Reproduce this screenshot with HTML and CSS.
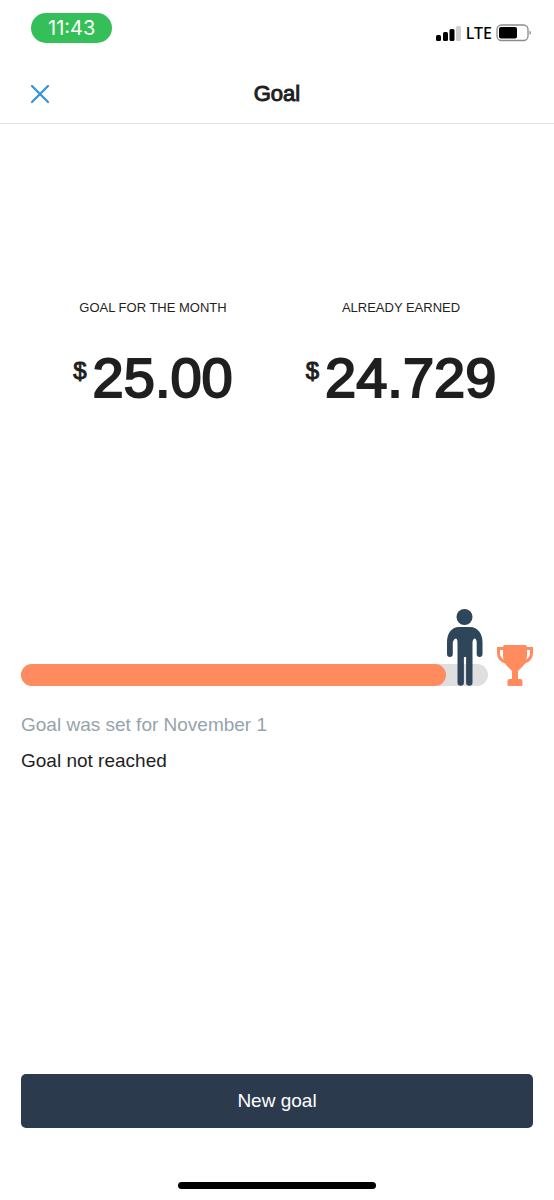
FILE: index.html
```html
<!DOCTYPE html>
<html lang="en">
<head>
	<meta charset="UTF-8">
	<meta name="viewport" content="width=device-width, initial-scale=1">
	<title>Goal</title>
	<link rel="stylesheet" href="styles.css">
</head>
<body>
	<div class="status">
		<span class="time">11:43</span>
		<div class="signal">
			<svg width="26" height="16" viewBox="0 0 26 16">
				<rect x="0" y="10" width="5" height="6" rx="1.5"/>
				<rect x="7" y="7" width="5" height="9" rx="1.5"/>
				<rect x="13.5" y="4" width="5" height="12" rx="1.5"/>
				<rect x="20" y="1" width="5" height="15" rx="1.5" fill="#d0d0d0"/>
			</svg>
			<span>LTE</span>
			<svg width="36" height="18" viewBox="0 0 36 18">
				<rect x="1" y="1" width="31" height="15.5" rx="4.5" fill="none" stroke="#8c8c8c" stroke-width="1.3"/>
				<rect x="3" y="3" width="18" height="11.5" rx="2"/>
				<path d="M33.5 6.5q3 2.2 0 4.5z" fill="#8c8c8c"/>
			</svg>
		</div>
	</div>
	<header class="header">
		<button class="close" type="button" aria-label="Close">
			<svg width="20" height="20" viewBox="0 0 20 20">
				<path d="M2 2l16 16M18 2L2 18" fill="none" stroke="#3492d8" stroke-width="2.2" stroke-linecap="round"/>
			</svg>
		</button>
		<h1>Goal</h1>
	</header>

	<main class="main">
		<div class="stats">
			<div class="stat">
				<h2>GOAL FOR THE MONTH</h2>
				<p class="amount"><span class="currency">$</span>25.00</p>
			</div>
			<div class="stat">
				<h2>ALREADY EARNED</h2>
				<p class="amount"><span class="currency">$</span>24.729</p>
			</div>
		</div>

		<div class="progress">
			<div class="track">
				<div class="fill" style="width: 91%">
					<svg class="person" width="38" height="78" viewBox="0 0 38 78" fill="#2f455a">
						<circle cx="18.5" cy="9" r="8"/>
						<path d="M13 19H24C32 19 36.500 26 36.500 34V46a2.900 2.900 0 0 1-5.800 0V34q-.5-3.500-2-3.500T26.500 34V74.500a3 3 0 0 1-6.400 0V49H17.900V74.500a3 3 0 0 1-6.400 0V34q-.2-3.500-1.800-3.500T6.800 34V46a2.900 2.900 0 0 1-5.800 0V34C1 26 5 19 13 19z"/>
					</svg>
				</div>
			</div>
			<svg class="trophy" width="36" height="41" viewBox="0 0 36 41" fill="#ff8b5e">
				<path d="M8 0H28Q30 0 30 2V10Q30 17 26 21L21 26V34H23.500Q25.500 34 25.500 36V40Q25.500 41 24.500 41H11.500Q10.500 41 10.500 40V36Q10.500 34 12.500 34H15V26L10 21Q6 17 6 10V2Q6 0 8 0z"/>
				<path d="M7 3.500H1.500V8Q1.500 15 9.500 17.500M29 3.500H34.500V8Q34.500 15 26.500 17.500" fill="none" stroke="#ff8b5e" stroke-width="3"/>
			</svg>
		</div>
		<p class="set">Goal was set for November 1</p>
		<p class="result">Goal not reached</p>

		<button class="new" type="button">New goal</button>
	</main>
	<div class="home"></div>
</body>
</html>
```
FILE: styles.css
```css
*{margin: 0;padding: 0;box-sizing: border-box;}
body {
	display: flex;
	flex-direction: column;
	min-height: 100vh;
	background: #fff;
	color: #1f1f1f;
	font: 19px/24px "Liberation Sans", Arial, sans-serif;
}
svg {
	display: block;
}
button {
	border: 0;
	font: inherit;
	cursor: pointer;
}

.status {
	display: flex;
	justify-content: space-between;
	align-items: flex-start;
	padding: 13px 22px 0 31px;
}
.time {
	padding: 0 17px;
	border-radius: 15px;
	background: #35bf58;
	color: #fff;
	font: 20px/30px Inter, sans-serif;
}
.signal {
	display: flex;
	align-items: center;
	gap: 4px;
	padding-top: 8px;
	color: #000;
	font: 500 16px/24px "Noto Sans", sans-serif;
}

.header {
	display: grid;
	grid-template-columns: 1fr auto 1fr;
	align-items: center;
	height: 79px;
	padding: 19px 30px 0;
	border-bottom: 1px solid #dfe1e3;
}
.header h1 {
	font-size: 22px;
	font-weight: normal;
	line-height: 24px;
	-webkit-text-stroke: 1px;
}
.close {
	justify-self: start;
	background: none;
}

.main {
	flex: 1;
	display: flex;
	flex-direction: column;
	padding: 0 21px;
}
.stats {
	display: grid;
	grid-template-columns: 1fr 1fr;
	padding: 176px 8px 0;
	text-align: center;
}
.stat h2 {
	font-size: 13px;
	font-weight: normal;
	line-height: 16px;
}
.amount {
	display: flex;
	justify-content: center;
	gap: 6px;
	margin-top: 30px;
	font-size: 56px;
	line-height: 64px;
	-webkit-text-stroke: 2px;
}
.currency {
	font-size: 24px;
	line-height: 50px;
	-webkit-text-stroke: 1px;
}

.progress {
	display: flex;
	align-items: flex-end;
	gap: 9px;
	margin-top: 235px;
}
.track {
	flex: 1;
	height: 22px;
	border-radius: 11px;
	background: #dfdfe1;
}
.fill {
	position: relative;
	height: 22px;
	border-radius: 11px;
	background: #ff8b5e;
}
.person {
	position: absolute;
	bottom: 0;
	left: 100%;
}
.set {
	margin-top: 27px;
	color: #96a3ac;
}
.result {
	margin-top: 12px;
}
.new {
	height: 54px;
	margin-top: auto;
	border-radius: 5px;
	background: #2b3b4d;
	color: #fff;
}
.home {
	width: 198px;
	height: 7px;
	margin: 54px auto 11px;
	border-radius: 4px;
	background: #000;
}
```
